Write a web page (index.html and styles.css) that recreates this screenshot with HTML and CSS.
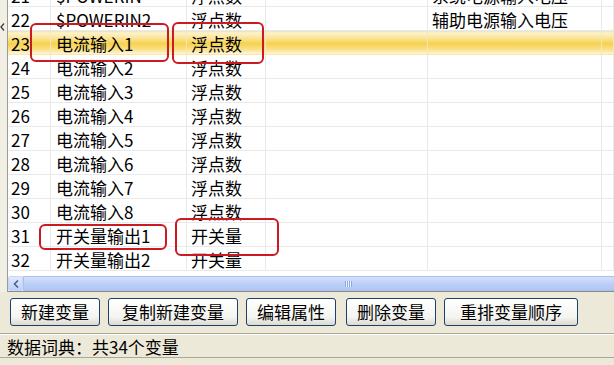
FILE: index.html
```html
<!DOCTYPE html>
<html lang="zh-CN">
<head>
    <meta charset="UTF-8">
    <title>数据词典</title>
    <link rel="stylesheet" href="styles.css">
</head>
<body>
    <div class="window">
        <div class="main">
            <div class="gutter">
                <svg class="collapse" width="5" height="8" viewBox="0 0 5 8"><path d="M4 0.5 L1 4 L4 7.5" fill="none" stroke="#3a3a3a" stroke-width="1.3"/></svg>
            </div>
            <div class="listview">
                <div class="rows">
                    <div class="row first"><div>21</div><div>$POWERIN</div><div>浮点数</div><div></div><div>系统电源输入电压</div><div></div></div>
                    <div class="row"><div>22</div><div>$POWERIN2</div><div>浮点数</div><div></div><div>辅助电源输入电压</div><div></div></div>
                    <div class="row selected"><div>23</div><div>电流输入1</div><div>浮点数</div><div></div><div></div><div></div></div>
                    <div class="row"><div>24</div><div>电流输入2</div><div>浮点数</div><div></div><div></div><div></div></div>
                    <div class="row"><div>25</div><div>电流输入3</div><div>浮点数</div><div></div><div></div><div></div></div>
                    <div class="row"><div>26</div><div>电流输入4</div><div>浮点数</div><div></div><div></div><div></div></div>
                    <div class="row"><div>27</div><div>电流输入5</div><div>浮点数</div><div></div><div></div><div></div></div>
                    <div class="row"><div>28</div><div>电流输入6</div><div>浮点数</div><div></div><div></div><div></div></div>
                    <div class="row"><div>29</div><div>电流输入7</div><div>浮点数</div><div></div><div></div><div></div></div>
                    <div class="row"><div>30</div><div>电流输入8</div><div>浮点数</div><div></div><div></div><div></div></div>
                    <div class="row"><div>31</div><div>开关量输出1</div><div>开关量</div><div></div><div></div><div></div></div>
                    <div class="row"><div>32</div><div>开关量输出2</div><div>开关量</div><div></div><div></div><div></div></div>
                </div>
                <div class="hscroll">
                    <div class="sb-btn">
                        <svg width="6" height="8" viewBox="0 0 6 8"><path d="M5 0.5 L1.5 4 L5 7.5" fill="none" stroke="#4d6185" stroke-width="1.6"/></svg>
                    </div>
                    <div class="sb-thumb"><span class="grip"></span></div>
                </div>
            </div>
        </div>
        <div class="toolbar">
            <button class="btn w1">新建变量</button>
            <button class="btn w2">复制新建变量</button>
            <button class="btn w1">编辑属性</button>
            <button class="btn w1 ml">删除变量</button>
            <button class="btn w3">重排变量顺序</button>
        </div>
        <div class="status">数据词典：共34个变量</div>

        <div class="mark m1"></div>
        <div class="mark m2"></div>
        <div class="mark m3"></div>
        <div class="mark m4"></div>
    </div>
</body>
</html>
```

FILE: styles.css
```css
html, body {
    margin: 0;
    padding: 0;
}
body {
    width: 614px;
    height: 365px;
    overflow: hidden;
    background-color: #ece9d8;
    font-family: "Noto Sans CJK SC", sans-serif;
    font-size: 17px;
    color: #000000;
}
.window {
    position: relative;
    height: 365px;
}
.main {
    display: flex;
    height: 292px;
}
.gutter {
    width: 7px;
    flex-shrink: 0;
    background-color: #f1efe4;
}
.collapse {
    display: block;
    margin-top: 23px;
}
.listview {
    flex: 1;
    border-left: 1px solid #9a9a9a;
    border-bottom: 1px solid #8c8c8c;
    background-color: #ffffff;
    overflow: hidden;
}
.rows {
    height: 276px;
    overflow: hidden;
}
.row {
    display: grid;
    grid-template-columns: 43px 136px 79px 162px 174px 1fr;
    height: 24px;
    box-sizing: border-box;
    border-bottom: 1px solid #e9e9e9;
}
.row.first {
    margin-top: -17px;
}
.row > div {
    border-right: 1px solid #e9e9e9;
    padding: 1px 0 0 4px;
    line-height: 23px;
    white-space: nowrap;
}
.row > div:first-child {
    padding-left: 3px;
}
.row > div:nth-child(2) {
    padding-left: 5px;
}
.row.selected {
    border-bottom-color: #f6e7b0;
    background: linear-gradient(#e6e3c0 0, #fdf3c8 2px, #fce49a 30%, #f7d24e 55%, #fae089 80%, #fef6d8 100%);
}
.row.selected > div {
    border-right-color: #f3e6bd;
}
.hscroll {
    display: flex;
    height: 15px;
}
.sb-btn {
    width: 15px;
    flex-shrink: 0;
    box-sizing: border-box;
    border: 1px solid #c7d5f4;
    border-radius: 2px;
    background: linear-gradient(#e1eafe, #bcd0f9);
    display: flex;
    align-items: center;
    justify-content: center;
}
.sb-thumb {
    flex: 1;
    box-sizing: border-box;
    border: 1px solid #a9c0f0;
    border-right: none;
    background: linear-gradient(#d4e0fc, #bacdf7 60%, #b2c7f5);
    display: flex;
    align-items: center;
}
.grip {
    display: block;
    width: 7px;
    height: 6px;
    margin-left: 321px;
    background: repeating-linear-gradient(90deg, #8da7e0 0 1px, #eef3ff 1px 2px);
}
.toolbar {
    display: flex;
    height: 42px;
    box-sizing: border-box;
    padding: 6px 0 0 10px;
    gap: 8px;
    border-bottom: 1px solid #aca899;
}
.btn {
    height: 28px;
    box-sizing: border-box;
    padding: 0;
    border: 1px solid #1c3f6e;
    border-radius: 3px;
    background: linear-gradient(#ffffff, #f4f4f0 70%, #dcdad0);
    font-family: "Noto Sans CJK SC", sans-serif;
    font-size: 17px;
    line-height: 24px;
    color: #000000;
}
.w1 {
    width: 90px;
}
.w2 {
    width: 130px;
}
.w3 {
    width: 134px;
}
.ml {
    margin-left: 2px;
}
.status {
    height: 24px;
    box-sizing: border-box;
    border-top: 1px solid #ffffff;
    border-bottom: 1px solid #aca899;
    padding-left: 7px;
    line-height: 24px;
}
.mark {
    position: absolute;
    box-sizing: border-box;
    border: 2px solid #cc1a22;
    border-radius: 6px;
}
.m1 {
    left: 30px;
    top: 23px;
    width: 139px;
    height: 39px;
}
.m2 {
    left: 172px;
    top: 22px;
    width: 92px;
    height: 42px;
}
.m3 {
    left: 39px;
    top: 224px;
    width: 128px;
    height: 26px;
}
.m4 {
    left: 175px;
    top: 218px;
    width: 104px;
    height: 38px;
}
```
